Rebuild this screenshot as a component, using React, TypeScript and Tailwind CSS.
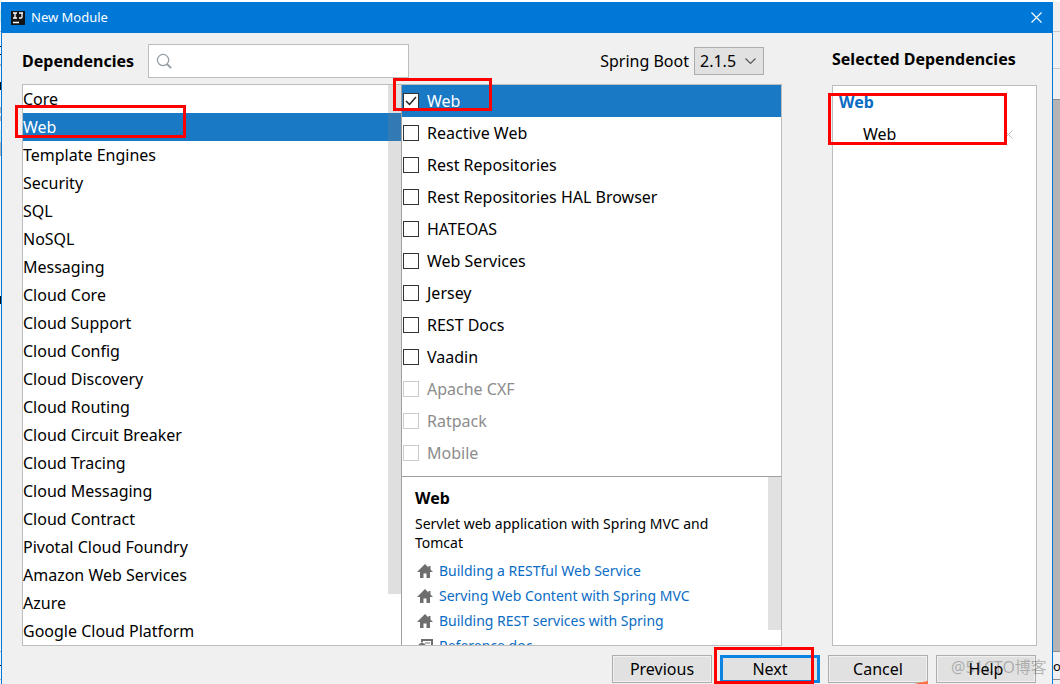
import React, { useState } from 'react';

const CATEGORIES = [
  'Core', 'Web', 'Template Engines', 'Security', 'SQL', 'NoSQL', 'Messaging',
  'Cloud Core', 'Cloud Support', 'Cloud Config', 'Cloud Discovery', 'Cloud Routing',
  'Cloud Circuit Breaker', 'Cloud Tracing', 'Cloud Messaging', 'Cloud Contract',
  'Pivotal Cloud Foundry', 'Amazon Web Services', 'Azure', 'Google Cloud Platform',
];

interface Dependency {
  name: string;
  disabled?: boolean;
}

const DEPENDENCIES: Dependency[] = [
  { name: 'Web' },
  { name: 'Reactive Web' },
  { name: 'Rest Repositories' },
  { name: 'Rest Repositories HAL Browser' },
  { name: 'HATEOAS' },
  { name: 'Web Services' },
  { name: 'Jersey' },
  { name: 'REST Docs' },
  { name: 'Vaadin' },
  { name: 'Apache CXF', disabled: true },
  { name: 'Ratpack', disabled: true },
  { name: 'Mobile', disabled: true },
];

const GUIDES = [
  'Building a RESTful Web Service',
  'Serving Web Content with Spring MVC',
  'Building REST services with Spring',
];

const HomeIcon = () => (
  <svg width="16" height="14" viewBox="0 0 16 14" fill="#6e6e6e" className="shrink-0">
    <path d="M8 0 0 8h3v6h3.5V9.5h3V14H13V8h3l-2.500-2.500V2h-2v1.500z" />
  </svg>
);

const DocIcon = () => (
  <svg width="16" height="14" viewBox="0 0 16 14" fill="none" stroke="#6e6e6e" className="shrink-0">
    <path d="M5 3.500V1h10v11h-4" strokeWidth="2" />
    <path d="M8 4h5M10 7h3" />
    <circle cx="5" cy="8" r="3" strokeWidth="2" />
  </svg>
);

const Marker: React.FC<{ className: string }> = ({ className }) => (
  <div className={`pointer-events-none absolute z-20 border-3 border-[#ff0000] ${className}`} />
);

const DialogButton: React.FC<{ label: string; primary?: boolean }> = ({ label, primary }) => (
  <button
    className={`block h-7 w-[100px] bg-[#e1e1e1] text-base leading-none text-black ${primary
      ? 'border-3 border-[#0a84e0]'
      : 'border border-[#adadad] shadow-[inset_0_0_0_1px_#f0f0f0]'
      }`}
  >
    {label}
  </button>
);

const App: React.FC = () => {
  const [category, setCategory] = useState('Web');
  const [selected, setSelected] = useState<string[]>(['Web']);
  const [query, setQuery] = useState('');

  const toggle = (name: string) => {
    setSelected(prev => prev.includes(name) ? prev.filter(n => n !== name) : [...prev, name]);
  };

  return (
    <div className="flex h-screen overflow-hidden bg-white pt-0.5 font-['Noto_Sans','Noto_Sans_CJK_SC',sans-serif] text-base text-black">
      {/* Window behind, left edge */}
      <svg width="1" height="682" viewBox="0 0 1 682" className="shrink-0">
        <path fill="#f4f4f4" d="M0 0h1v682H0z" />
        <path fill="#c8ecec" d="M0 8h1v12H0zM0 128h1v12H0z" />
        <path fill="#b4b4b4" d="M0 29h1v1H0zM0 62h1v2H0zM0 105h1v6H0zM0 114h1v5H0zM0 140h1v14H0zM0 649h1v1H0zM0 677h1v1H0z" />
        <path fill="#111" d="M0 44h1v1H0zM0 52h1v1H0zM0 80h1v8H0zM0 294h1v8H0zM0 663h1v1H0z" />
      </svg>

      {/* Dialog */}
      <div className="flex min-w-0 flex-1 flex-col border-x border-[#0078d7] bg-[#f0f0f0]">
        <header className="flex h-[31px] shrink-0 items-center bg-[#0078d7] pr-2 pl-2 text-white">
          <svg width="16" height="16" viewBox="0 0 16 16" className="mr-[5px]">
            <rect x="1" y="1" width="14" height="14" fill="#151515" />
            <path d="M3 3h4M5 3v5M3 8h4M9 3h4M12 3v4q0 1-1 1H9M3 12.500h6" fill="none" stroke="#fff" strokeWidth="1.300" />
          </svg>
          <h1 className="flex-1 text-[13px]">New Module</h1>
          <button aria-label="Close" className="flex h-4 w-4 items-center justify-center">
            <svg width="11" height="11" viewBox="0 0 11 11" fill="none" stroke="#fff" strokeWidth="1.200">
              <path d="M.5.5l10 10M10.5.5l-10 10" />
            </svg>
          </button>
        </header>

        <main className="flex min-h-0 flex-1 gap-[50px] pr-[15px] pl-5">
          <section className="flex min-w-0 flex-1 flex-col">
            <div className="flex h-[51px] shrink-0 items-center pt-1">
              <label htmlFor="search" className="w-[126px] font-bold">Dependencies</label>
              <div className="flex h-[34px] w-[261px] items-center border border-[#bdbdbd] bg-white pl-[7px]">
                <svg width="16" height="16" viewBox="0 0 17 17" fill="none" stroke="#929ba1" strokeWidth="1.300">
                  <circle cx="7.500" cy="7.500" r="6" />
                  <path d="M11.500 11.500l4.500 4.500" strokeWidth="2" />
                </svg>
                <input
                  id="search"
                  type="text"
                  value={query}
                  onChange={e => setQuery(e.target.value)}
                  className="min-w-0 flex-1 px-2 outline-none"
                />
              </div>
              <label htmlFor="version" className="mr-[5px] ml-auto">Spring Boot</label>
              <div className="relative mr-[18px]">
                <select
                  id="version"
                  defaultValue="2.1.5"
                  className="block h-7 w-[70px] appearance-none border border-[#adadad] bg-[#e1e1e1] pl-[5px] leading-none"
                >
                  <option>2.1.5</option>
                </select>
                <svg width="11" height="7" viewBox="0 0 11 7" fill="none" stroke="#555" strokeWidth="1.200" className="pointer-events-none absolute top-[11px] right-2">
                  <path d="M.5.5l5 5 5-5" />
                </svg>
              </div>
            </div>

            <div className="flex h-[562px] border border-[#bdbdbd] bg-white">
              {/* Categories */}
              <div className="relative flex-1">
                <ul>
                  {CATEGORIES.map(c => (
                    <li key={c} className="relative">
                      <button
                        onClick={() => setCategory(c)}
                        className={`block h-7 w-full text-left ${c === category ? 'bg-[#1979c4] text-white' : ''}`}
                      >
                        {c}
                      </button>
                      {c === 'Web' && <Marker className="-top-2 -left-2 h-[33px] w-[171px]" />}
                    </li>
                  ))}
                </ul>
                <div className="absolute top-0 right-0 h-[509px] w-[13px] bg-[#808080]/25" />
              </div>

              {/* Dependencies of the category */}
              <div className="flex w-[380px] flex-col border-l border-[#a0a0a0]">
                <ul className="h-[391px] shrink-0">
                  {DEPENDENCIES.map((d, idx) => (
                    <li key={d.name} className={`relative ${idx === 0 ? 'bg-[#1979c4] text-white' : ''}`}>
                      <label className={`flex h-8 items-center gap-2 pl-px ${d.disabled ? 'text-[#8c8c8c]' : ''}`}>
                        <span className="relative flex">
                          <input
                            type="checkbox"
                            checked={selected.includes(d.name)}
                            disabled={d.disabled}
                            onChange={() => toggle(d.name)}
                            className="h-4 w-4 appearance-none border border-[#333] bg-white disabled:border-[#ccc]"
                          />
                          {selected.includes(d.name) && (
                            <svg width="16" height="16" viewBox="0 0 16 16" fill="none" stroke="#222" strokeWidth="1.500" className="pointer-events-none absolute inset-0">
                              <path d="M3 8l3.500 3.500L13 4" />
                            </svg>
                          )}
                        </span>
                        {d.name}
                      </label>
                      {idx === 0 && <Marker className="-top-[7px] -left-[9px] h-[33px] w-[99px]" />}
                    </li>
                  ))}
                </ul>

                <div className="relative min-h-0 flex-1 overflow-hidden border-t border-[#a0a0a0] pt-[9px] pr-8 pl-[13px]">
                  <h2 className="font-bold">Web</h2>
                  <p className="mt-1 text-[14px] leading-[19px]">Servlet web application with Spring MVC and Tomcat</p>
                  <ul className="mt-1.5 text-[14px]">
                    {GUIDES.map(g => (
                      <li key={g} className="flex h-[25px] items-center gap-1.5 pl-0.5">
                        <HomeIcon />
                        <a href="#guide" className="text-[#0a6cc4]">{g}</a>
                      </li>
                    ))}
                    <li className="flex h-[25px] items-center gap-1.5 pl-0.5">
                      <DocIcon />
                      <a href="#docs" className="text-[#0a6cc4]">Reference doc</a>
                    </li>
                  </ul>
                  <div className="absolute top-0 right-0 h-[153px] w-[13px] bg-[#e1e1e1]" />
                </div>
              </div>
            </div>
          </section>

          <section className="flex w-[205px] shrink-0 flex-col">
            <h2 className="flex h-13 shrink-0 items-center font-bold">Selected Dependencies</h2>
            <div className="relative h-[561px] border border-[#bdbdbd] bg-white">
              <h3 className="h-8 pl-1.5 leading-8 font-bold text-[#0a6cc4]">Web</h3>
              <ul>
                {selected.map(name => (
                  <li key={name} className="flex h-8 items-center justify-between pr-[23px] pl-[30px]">
                    {name}
                    <button aria-label={`Remove ${name}`} onClick={() => toggle(name)}>
                      <svg width="9" height="9" viewBox="0 0 9 9" fill="none" stroke="#bbb">
                        <path d="M.5.5l8 8M8.5.5l-8 8" />
                      </svg>
                    </button>
                  </li>
                ))}
              </ul>
              <Marker className="top-[7px] -left-[5px] h-[52px] w-[179px]" />
            </div>
          </section>
        </main>

        <footer className="flex h-[38px] shrink-0 justify-end gap-2 pt-[9px] pr-4">
          <DialogButton label="Previous" />
          <div className="relative">
            <DialogButton label="Next" primary />
            <Marker className="-top-2 -left-1.5 h-[37px] w-[100px]" />
          </div>
          <div className="relative">
            <DialogButton label="Cancel" />
            {/* Tip of an orange shape rising from below */}
            <svg width="16" height="4" viewBox="0 0 16 4" fill="#ff7043" className="absolute right-0 -bottom-px">
              <path d="M0 4Q7 1 16 0v4z" />
            </svg>
          </div>
          <div className="relative">
            <DialogButton label="Help" />
            <span className="pointer-events-none absolute top-0 left-[15px] leading-6 whitespace-nowrap text-black/25">@51CTO博客</span>
          </div>
        </footer>
      </div>

      {/* Window behind, right edge */}
      <div className="flex w-[7px] shrink-0 flex-col overflow-hidden bg-[#f0f0f0]">
        <div className="h-[30px] shrink-0 border-b border-[#c8c8c8]" />
        <div className="h-[37px] shrink-0 border-b border-[#c8c8c8]" />
        <div className="h-[30px] shrink-0" />
        <div className="flex-1 border-y border-[#8c8c8c] bg-[#b4b4b4]" />
        <div className="h-[28px] shrink-0 border-b border-[#8c8c8c] text-[13px] leading-7">o</div>
        <div className="h-1 shrink-0" />
      </div>
    </div>
  );
};

export default App;
